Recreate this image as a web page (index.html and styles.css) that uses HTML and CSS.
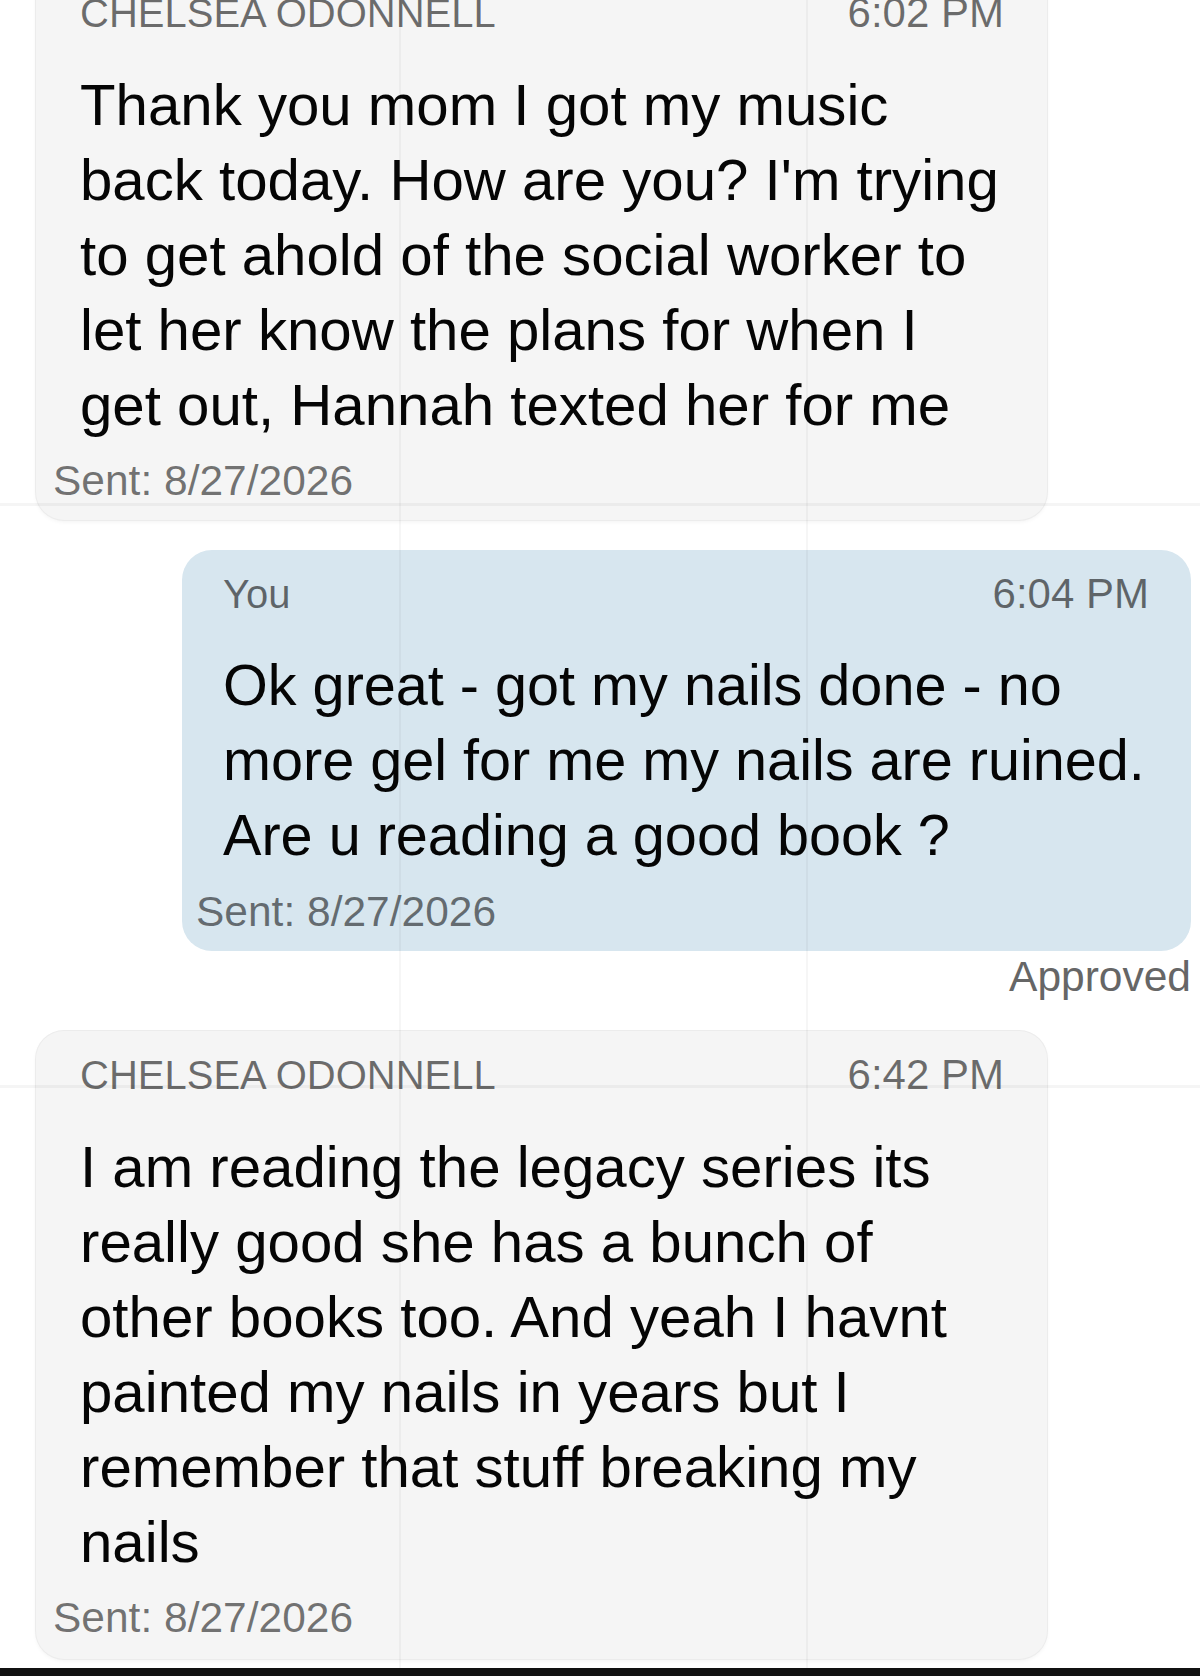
FILE: index.html
```html
<!DOCTYPE html>
<html lang="en">
<head>
    <meta charset="UTF-8">
    <meta name="viewport" content="width=device-width, initial-scale=1.0">
    <title>Messages</title>
    <link rel="stylesheet" href="styles.css">
</head>
<body>
    <div class="thread">
        <div class="msg incoming">
            <div class="bubble">
                <div class="meta">
                    <span class="sender">CHELSEA ODONNELL</span>
                    <span class="time">6:02 PM</span>
                </div>
                <p class="text">Thank you mom I got my music<br>back today. How are you? I'm trying<br>to get ahold of the social worker to<br>let her know the plans for when I<br>get out, Hannah texted her for me</p>
                <div class="sent">Sent: 8/27/2026</div>
            </div>
        </div>

        <div class="msg outgoing">
            <div class="bubble">
                <div class="meta">
                    <span class="sender">You</span>
                    <span class="time">6:04 PM</span>
                </div>
                <p class="text">Ok great - got my nails done - no<br>more gel for me my nails are ruined.<br>Are u reading a good book ?</p>
                <div class="sent">Sent: 8/27/2026</div>
            </div>
            <div class="status">Approved</div>
        </div>

        <div class="msg incoming last">
            <div class="bubble">
                <div class="meta">
                    <span class="sender">CHELSEA ODONNELL</span>
                    <span class="time">6:42 PM</span>
                </div>
                <p class="text">I am reading the legacy series its<br>really good she has a bunch of<br>other books too. And yeah I havnt<br>painted my nails in years but I<br>remember that stuff breaking my<br>nails</p>
                <div class="sent">Sent: 8/27/2026</div>
            </div>
        </div>
    </div>

    <div class="home-bar"></div>

    <!-- faint folds from the stitched screenshot -->
    <div class="creases"></div>
</body>
</html>
```

FILE: styles.css
```css
html, body {
    height: 100%;
}

body {
    margin: 0;
    display: flex;
    flex-direction: column;
    overflow: hidden;
    background-color: #ffffff;
    font-family: "Liberation Sans", Arial, sans-serif;
    color: #050505;
}

.thread {
    display: flex;
    flex-direction: column;
    gap: 30px;
    margin-top: -31px;
    padding: 0 9px 0 36px;
}

.msg {
    display: flex;
    flex-direction: column;
}

.msg.incoming {
    align-items: flex-start;
}

.msg.outgoing {
    align-items: flex-end;
}

.bubble {
    box-sizing: border-box;
    padding: 20px 43px 15px 44px;
    border-radius: 28px;
}

.incoming .bubble {
    width: 1011px;
    background-color: #f5f5f5;
    box-shadow: 0 0 0 1px #ececec, 0 2px 4px rgba(0, 0, 0, 0.05);
}

.last .bubble {
    padding-bottom: 17px;
}

.outgoing .bubble {
    width: 1009px;
    padding-left: 41px;
    padding-right: 42px;
    background-color: #d7e6ef;
    border-radius: 30px;
}

.meta {
    display: flex;
    justify-content: space-between;
    align-items: baseline;
    font-size: 40px;
    line-height: 48px;
    color: rgba(0, 0, 0, 0.56);
}

.time {
    font-size: 42px;
}

.text {
    margin: 30px 0 0;
    font-size: 58.2px;
    line-height: 75px;
    white-space: nowrap;
}

.outgoing .text {
    font-size: 57.6px;
}

.sent {
    margin: 15px 0 0 -27px;
    font-size: 42.5px;
    line-height: 48px;
    color: rgba(0, 0, 0, 0.55);
}

.status {
    margin-top: 2px;
    font-size: 42.5px;
    line-height: 48px;
    color: #666666;
}

.home-bar {
    margin-top: auto;
    height: 8px;
    background-color: #111111;
}

.creases {
    position: fixed;
    top: 0;
    left: 0;
    right: 0;
    bottom: 8px;
    pointer-events: none;
    background:
        linear-gradient(to right, transparent 399px, rgba(0, 0, 0, 0.035) 399px, rgba(0, 0, 0, 0.035) 401px, transparent 401px),
        linear-gradient(to right, transparent 806px, rgba(0, 0, 0, 0.035) 806px, rgba(0, 0, 0, 0.035) 808px, transparent 808px),
        linear-gradient(to bottom, transparent 503px, rgba(0, 0, 0, 0.04) 503px, rgba(0, 0, 0, 0.04) 506px, transparent 506px),
        linear-gradient(to bottom, transparent 1085px, rgba(0, 0, 0, 0.04) 1085px, rgba(0, 0, 0, 0.04) 1088px, transparent 1088px);
}
```
